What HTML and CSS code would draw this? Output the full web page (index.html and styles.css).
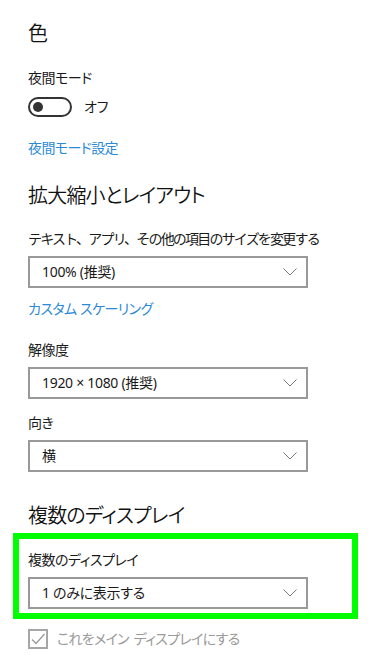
FILE: index.html
```html
<!DOCTYPE html>
<html lang="ja">
<head>
<meta charset="utf-8">
<link rel="stylesheet" href="styles.css">
</head>
<body>
<main class="page">
  <h2 class="heading h-color">色</h2>
  <div class="label l-night">夜間モード</div>
  <div class="toggle-row">
    <span class="toggle"><span class="knob"></span></span>
    <span class="toggle-text">オフ</span>
  </div>
  <a class="link l-nightset">夜間モード設定</a>

  <h2 class="heading h-scale">拡大縮小とレイアウト</h2>
  <div class="label l-size">テキスト、アプリ、その他の項目のサイズを変更する</div>
  <div class="select s-after-label"><span class="select-text">100% (推奨)</span><svg class="chev" width="14" height="8" viewBox="0 0 14 8"><path d="M0.5 0.5 L7 7 L13.5 0.5" fill="none" stroke="#7a7a7a" stroke-width="1"/></svg></div>
  <a class="link l-custom">カスタム スケーリング</a>
  <div class="label l-res">解像度</div>
  <div class="select s-after-label"><span class="select-text">1920 × 1080 (推奨)</span><svg class="chev" width="14" height="8" viewBox="0 0 14 8"><path d="M0.5 0.5 L7 7 L13.5 0.5" fill="none" stroke="#7a7a7a" stroke-width="1"/></svg></div>
  <div class="label l-orient">向き</div>
  <div class="select s-after-label"><span class="select-text">横</span><svg class="chev" width="14" height="8" viewBox="0 0 14 8"><path d="M0.5 0.5 L7 7 L13.5 0.5" fill="none" stroke="#7a7a7a" stroke-width="1"/></svg></div>

  <h2 class="heading h-multi">複数のディスプレイ</h2>
  <section class="highlight">
    <div class="label l-multi">複数のディスプレイ</div>
    <div class="select s-after-label"><span class="select-text">1 のみに表示する</span><svg class="chev" width="14" height="8" viewBox="0 0 14 8"><path d="M0.5 0.5 L7 7 L13.5 0.5" fill="none" stroke="#7a7a7a" stroke-width="1"/></svg></div>
  </section>
  <div class="check-row">
    <span class="checkbox"><svg width="16" height="16" viewBox="0 0 16 16"><path d="M2 8.5 L6 12.5 L14.5 3" fill="none" stroke="#9a9a9a" stroke-width="1.3"/></svg></span>
    <span class="check-text">これをメイン ディスプレイにする</span>
  </div>
</main>
</body>
</html>
```

FILE: styles.css
```css
html, body {
  margin: 0;
  padding: 0;
  background: #ffffff;
}
body {
  font-family: "Noto Sans", "Noto Sans CJK JP", sans-serif;
  font-feature-settings: "palt";
  color: #000000;
  width: 385px;
  height: 668px;
  overflow: hidden;
}
.page {
  padding: 20px 0 0 28px;
  display: flex;
  flex-direction: column;
  align-items: flex-start;
}
.heading {
  margin: 0;
  font-size: 20px;
  font-weight: 350;
  letter-spacing: -0.8px;
  line-height: 28px;
  height: 28px;
  color: #111111;
}
.h-scale { margin-top: 24px; }
.h-multi { margin-top: 30px; }
.label {
  font-size: 14px;
  letter-spacing: -0.5px;
  line-height: 20px;
  height: 20px;
  color: #1a1a1a;
}
.l-night { margin-top: 20px; }
.l-size {
  margin-top: 19px;
  font-feature-settings: normal;
  letter-spacing: -1.8px;
}
.l-res { margin-top: 21px; }
.l-orient { margin-top: 14px; }
.l-multi { margin-top: 0; }
.toggle-row {
  margin-top: 9px;
  display: flex;
  align-items: center;
  height: 20px;
}
.toggle {
  box-sizing: border-box;
  width: 44px;
  height: 20px;
  border: 2px solid #333333;
  border-radius: 10px;
  display: flex;
  align-items: center;
  padding-left: 3px;
}
.knob {
  width: 10px;
  height: 10px;
  border-radius: 50%;
  background: #333333;
}
.toggle-text {
  margin-left: 12px;
  font-size: 14px;
  line-height: 20px;
  color: #1a1a1a;
}
.link {
  font-size: 14px;
  letter-spacing: -0.6px;
  word-spacing: 0.5px;
  line-height: 20px;
  height: 20px;
  color: #2b8ad6;
  text-decoration: none;
}
.l-nightset { margin-top: 21px; }
.l-custom { margin-top: 11px; }
.select {
  box-sizing: border-box;
  width: 280px;
  height: 32px;
  border: 2px solid #999999;
  display: flex;
  align-items: center;
  justify-content: space-between;
  padding: 0 9px 0 12px;
}
.s-after-label { margin-top: 7px; }
.select-text {
  font-size: 14px;
  letter-spacing: -0.3px;
  line-height: 20px;
  color: #1a1a1a;
}
.chev { display: block; }
.highlight {
  box-sizing: border-box;
  margin: 3px 0 0 -15px;
  width: 345px;
  height: 86px;
  border: 6px solid #00ff00;
  padding: 11px 0 0 9px;
}
.check-row {
  margin-top: 10px;
  display: flex;
  align-items: center;
  height: 20px;
}
.checkbox {
  box-sizing: border-box;
  width: 20px;
  height: 20px;
  border: 2px solid #a6a6a6;
  display: flex;
  align-items: center;
  justify-content: center;
}
.checkbox svg { display: block; }
.check-text {
  margin-left: 9px;
  font-size: 14px;
  letter-spacing: -0.7px;
  word-spacing: 2px;
  line-height: 20px;
  color: #9a9a9a;
}
```
